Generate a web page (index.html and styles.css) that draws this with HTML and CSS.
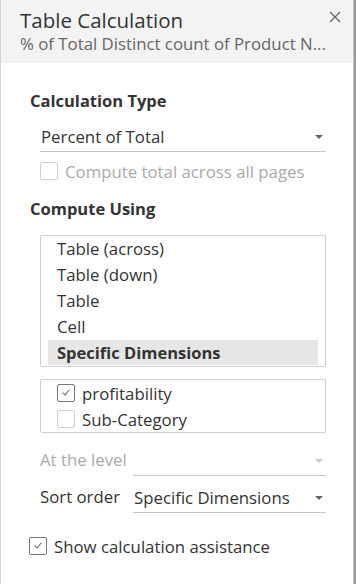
FILE: index.html
```html
<!DOCTYPE html>
<html>
  <head>
    <link rel="stylesheet" href="styles.css">
  </head>
  <body>
    <div class="panel">
      <div class="header">
        <div class="title">Table Calculation</div>
        <div class="subtitle">% of Total Distinct count of Product N...</div>
        <svg class="close" width="12" height="12" viewBox="0 0 12 12">
          <path d="M1 1 L11 11 M11 1 L1 11" stroke="#666" stroke-width="1.3" fill="none"/>
        </svg>
      </div>

      <div class="content">
        <div class="section-title">Calculation Type</div>
        <div class="select">
          <span>Percent of Total</span>
          <span class="arrow"></span>
        </div>
        <div class="check-row disabled">
          <span class="box"></span>
          <span>Compute total across all pages</span>
        </div>

        <div class="section-title second">Compute Using</div>
        <div class="listbox">
          <div class="item">Table (across)</div>
          <div class="item">Table (down)</div>
          <div class="item">Table</div>
          <div class="item">Cell</div>
          <div class="item selected">Specific Dimensions</div>
        </div>

        <div class="dims">
          <div class="check-row">
            <span class="box checked"></span>
            <span>profitability</span>
          </div>
          <div class="check-row">
            <span class="box"></span>
            <span>Sub-Category</span>
          </div>
        </div>

        <div class="field disabled">
          <span class="field-label">At the level</span>
          <div class="select small">
            <span></span>
            <span class="arrow"></span>
          </div>
        </div>
        <div class="field">
          <span class="field-label">Sort order</span>
          <div class="select small">
            <span>Specific Dimensions</span>
            <span class="arrow"></span>
          </div>
        </div>
      </div>

      <div class="check-row assist">
        <span class="box checked"></span>
        <span>Show calculation assistance</span>
      </div>
    </div>
  </body>
</html>
```

FILE: styles.css
```css
body {
  margin: 0;
  background: #9a9a9a;
  font-family: "Open Sans", "Liberation Sans", sans-serif;
  color: #333;
}

.panel {
  width: 352px;
  height: 584px;
  background: #fff;
  border-left: 1px solid #d4d4d4;
  border-right: 1px solid #c4c4c4;
}

.header {
  position: relative;
  background: #f3f3f3;
  height: 63px;
  padding: 7px 0 0 19px;
  box-sizing: border-box;
}

.title {
  font-size: 20.5px;
  line-height: 26px;
  color: #333;
}

.subtitle {
  font-size: 16.8px;
  line-height: 22px;
  color: #666;
}

.close {
  position: absolute;
  right: 12px;
  top: 11px;
}

.content {
  padding: 28px 27px 0 39px;
}

.section-title {
  font-weight: bold;
  font-size: 16.5px;
  line-height: 20px;
  height: 20px;
  margin-left: -10px;
}

.section-title.second {
  margin-top: 15px;
}

.select {
  display: flex;
  align-items: center;
  justify-content: space-between;
  border-bottom: 1px solid #c8c8c8;
  font-size: 16.8px;
  padding: 1px 3px 0 1px;
  box-sizing: border-box;
  height: 31px;
  margin-top: 10px;
}

.arrow {
  width: 0;
  height: 0;
  border-left: 4px solid transparent;
  border-right: 4px solid transparent;
  border-top: 4px solid #666;
}

.check-row {
  display: flex;
  align-items: center;
  gap: 7px;
  font-size: 16.8px;
  height: 26px;
}

.check-row.disabled {
  color: #aaa;
  margin-top: 6px;
}

.box {
  width: 16px;
  height: 16px;
  border: 1px solid #777;
  border-radius: 2px;
  position: relative;
  flex: none;
}

.disabled .box,
.dims .box:not(.checked) {
  border-color: #d0d0d0;
}

.box.checked::after {
  content: "";
  position: absolute;
  left: 6px;
  top: 3px;
  width: 3px;
  height: 6px;
  border-right: 1.3px solid #666;
  border-bottom: 1.3px solid #666;
  transform: rotate(40deg);
}

.listbox {
  margin-top: 16px;
  border: 1px solid #cfcfcf;
  border-radius: 2px;
  padding: 0 7px;
  height: 132px;
  box-sizing: border-box;
}

.item {
  height: 26px;
  line-height: 26px;
  font-size: 16.8px;
  padding-left: 9px;
}

.item.selected {
  background: #e6e6e6;
  font-weight: bold;
  font-size: 16.5px;
  height: 25px;
  line-height: 25px;
}

.dims {
  margin-top: 12px;
  border: 1px solid #cfcfcf;
  border-radius: 2px;
  padding: 0 0 0 16px;
  height: 54px;
  box-sizing: border-box;
}

.field {
  display: flex;
  align-items: flex-end;
  font-size: 16.8px;
  margin-top: 12px;
}

.field + .field {
  margin-top: 6px;
}

.field.disabled {
  color: #aaa;
}

.field.disabled .arrow {
  border-top-color: #c8c8c8;
}

.field-label {
  width: 93px;
  line-height: 30px;
  padding-bottom: 1px;
}

.select.small {
  flex: 1;
  margin-top: 0;
}

.assist {
  margin: 20px 0 0 28px;
}
```
